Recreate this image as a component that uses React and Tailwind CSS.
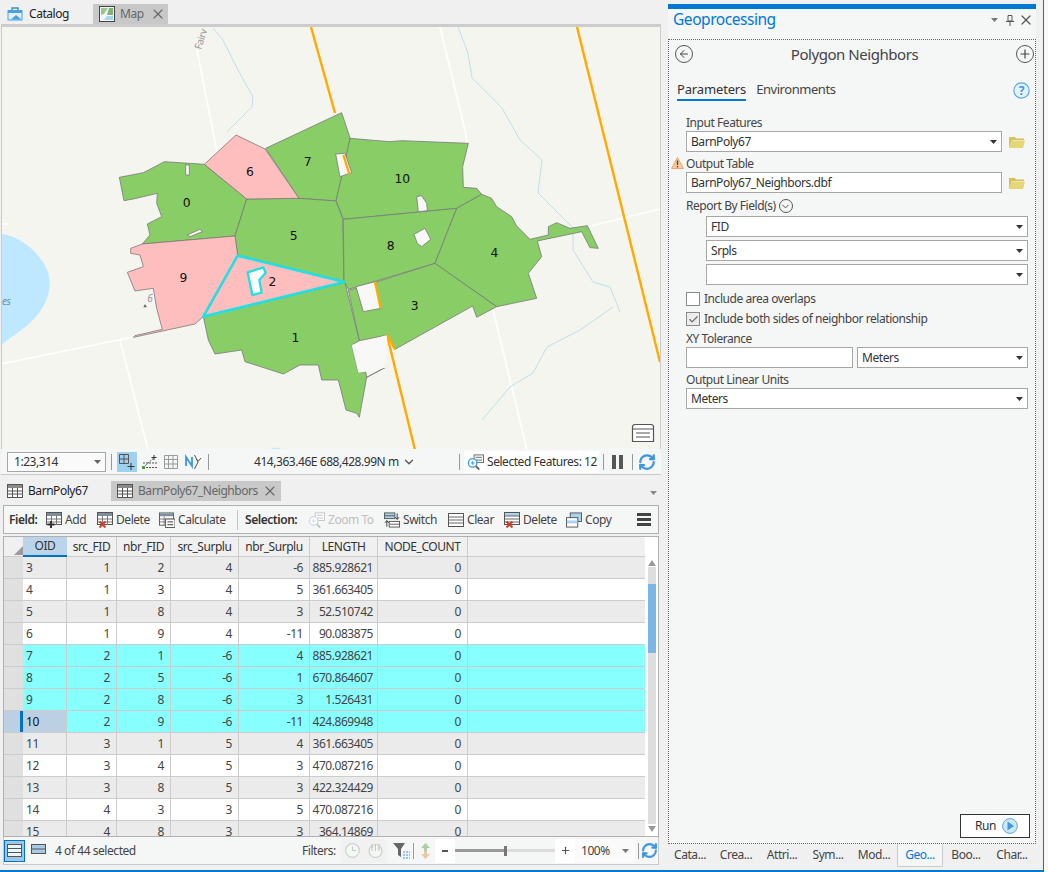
import { ChevronDown, Plus, RefreshCw, X, ArrowLeft, Check } from "lucide-react";

const FONT = { fontFamily: '"Noto Sans", sans-serif' };

const ROWS = [
  ["3", "1", "2", "4", "-6", "885.928621", "0", "g"],
  ["4", "1", "3", "4", "5", "361.663405", "0", "w"],
  ["5", "1", "8", "4", "3", "52.510742", "0", "g"],
  ["6", "1", "9", "4", "-11", "90.083875", "0", "w"],
  ["7", "2", "1", "-6", "4", "885.928621", "0", "c"],
  ["8", "2", "5", "-6", "1", "670.864607", "0", "c"],
  ["9", "2", "8", "-6", "3", "1.526431", "0", "c"],
  ["10", "2", "9", "-6", "-11", "424.869948", "0", "c"],
  ["11", "3", "1", "5", "4", "361.663405", "0", "g"],
  ["12", "3", "4", "5", "3", "470.087216", "0", "w"],
  ["13", "3", "8", "5", "3", "422.324429", "0", "g"],
  ["14", "4", "3", "3", "5", "470.087216", "0", "w"],
  ["15", "4", "8", "3", "3", "364.14869", "0", "g"]
];

const ROW_BG = { g: "bg-[#ebebeb]", w: "bg-white", c: "bg-[#88ffff]" };
const GRID_COLS = "grid grid-cols-[16px_3px_44px_50px_54px_68px_71px_68px_90px_178px]";

const GREEN = "#89cd66";
const PINK = "#ffbebe";
const EDGE = "#787878";
const BG = "#f5f5f0";

const GREEN_POLYS = [
  "58,232 130,218 165,200 193,185 313,193 440,297 405,408 127,432 150,405 142,372 185,350 170,310 172,280 100,297 72,302",
  "497,145 725,38 750,113 745,150 708,303 597,295",
  "750,115 868,125 905,122 1105,130 1088,200 1090,262 1130,265 1145,283 1070,325 730,358 708,303 725,230",
  "440,297 597,295 708,303 728,355 732,545 413,465 405,408",
  "730,358 1070,325 1005,490 745,568 732,545",
  "1070,325 1145,283 1175,295 1190,320 1235,350 1250,378 1290,418 1345,405 1345,380 1370,368 1410,385 1462,377 1495,445 1470,443 1445,395 1312,423 1325,470 1285,520 1310,595 1190,620 1005,490",
  "745,570 768,565 1005,490 1190,620 1130,652 1118,618 885,748 862,705 778,722",
  "310,650 735,548 778,722 755,735 775,818 797,815 800,832 855,803 800,832 778,952 770,940 738,930 715,840 665,840 655,795 600,795 550,822 435,785 425,750 345,762 325,720"
];

const PINK_POLYS = [
  "313,193 408,105 495,147 597,295 440,297",
  "127,432 405,408 413,465 310,650 285,672 100,712 105,707 187,688 170,625 160,565 105,573 82,517 130,500 120,465 92,460 92,445"
];

const HOLES = [
  "257,195 268,195 268,225 257,225",
  "262,405 300,388 307,395 270,410",
  "707,162 735,160 755,218 720,230",
  "950,290 965,287 980,310 982,332 955,335",
  "942,403 975,385 992,418 965,440 952,430",
  "768,560 825,545 842,625 790,635"
];

const MAP_LABELS = [
  ["0", 260, 309], ["6", 450, 215], ["7", 623, 184], ["10", 907, 235], ["5", 581, 406], ["8", 872, 436],
  ["4", 1183, 457], ["9", 250, 532], ["2", 517, 544], ["3", 944, 616], ["1", 586, 712]
];

function MapDrawing() {
  return (
    <svg width="658" height="422" viewBox="2 27 658 422" className="block" style={{ background: BG }}>
      {/* lake */}
      <path d="M1 234 C20 236 40 252 48 272 C54 292 44 312 24 328 L1 345 Z" fill="#bee8ff" />
      <path d="M270 450 C273 447 280 447 283 450 Z" fill="#bee8ff" />
      <text x="2" y="305" fontSize="10" fontStyle="italic" fill="#6f8fa8" style={FONT}>es</text>

      {/* roads */}
      <g fill="none" stroke="#ffffff" strokeWidth="1.6">
        <path d="M197 50 L217 152" />
        <path d="M440 27 L465 130 L467 143" />
        <path d="M493 310 L527 450" />
        <path d="M120 340 L148 450" />
        <path d="M1 364 L133 337 M587 227 L660 209" />
        <path d="M1 224 L8 224" />
      </g>

      {/* streams */}
      <g fill="none" stroke="#b9e2ea" strokeWidth="1">
        <path d="M213 28 L223 40 L238 70 L253 97 L252 107 L227 132" />
        <path d="M458 27 L468 53 L472 78 L502 108 L520 140 L542 160 L538 193 L573 228 L573 250 L593 282 L610 287 L620 312" />
        <path d="M613 307 L580 330 L547 347 L533 373 L510 387 L482 420" />
      </g>

      {/* rail lines */}
      <g fill="none" stroke="#ffaa00" strokeWidth="2.4">
        <path d="M311 27 L335 113" />
        <path d="M387 335 L415 450" />
        <path d="M577 27 L660 362" />
      </g>

      <text x="0" y="0" fontSize="10" fill="#9a9a9a" transform="translate(201 50) rotate(-72)" style={FONT}>Fairv</text>

      <g transform="translate(100 100) scale(0.33333)">
        <g strokeWidth="2.4" stroke={EDGE} strokeLinejoin="round">
          {GREEN_POLYS.map((points) => (
            <polygon key={points} points={points} fill={GREEN} />
          ))}
          {PINK_POLYS.map((points) => (
            <polygon key={points} points={points} fill={PINK} />
          ))}
          {HOLES.map((points) => (
            <polygon key={points} points={points} fill="#f8f8f6" />
          ))}
        </g>
        <polygon points="755,735 862,705 855,803 797,815 775,818" fill="#f8f8f6" />
        <path d="M862 705 L885 748" stroke="#ffaa00" strokeWidth="7" fill="none" />
        <path d="M730 165 L748 222 M825 545 L842 625" stroke="#ffaa00" strokeWidth="7" fill="none" />
        <polygon points="413,467 733,546 310,650" fill={PINK} stroke="#22dfe6" strokeWidth="8" strokeLinejoin="round" />
        <polygon points="443,517 490,502 497,518 478,540 485,578 457,585" fill="#ffffff" stroke="#22dfe6" strokeWidth="7" strokeLinejoin="round" />
        <polygon points="130,622 141,622 135,612" fill="#666" />
        <text x="142" y="606" fontSize="30" fontStyle="italic" fill="#999" style={FONT}>6</text>
        {MAP_LABELS.map(([label, x, y]) => (
          <text
            key={label}
            x={x}
            y={y + 13}
            fontSize="37"
            fill="#111"
            textAnchor="middle"
            style={{ fontFamily: '"DejaVu Sans", sans-serif', letterSpacing: 0 }}
          >
            {label}
          </text>
        ))}
      </g>
    </svg>
  );
}

function Caret({ className = "", color = "#333" }) {
  return (
    <svg width="7" height="4" viewBox="0 0 7 4" className={className}>
      <path d="M0 0 H7 L3.5 4 Z" fill={color} />
    </svg>
  );
}

function GridIcon({ className = "", stroke = "#555", head = "#8a8a8a" }) {
  return (
    <svg width="16" height="14" viewBox="0 0 16 14" className={className}>
      <rect x="0.5" y="0.5" width="15" height="13" fill="#fff" stroke={stroke} />
      <rect x="1" y="1" width="14" height="3" fill={head} />
      <path d="M1 7 H15 M1 10 H15 M5.5 4 V13 M10.5 4 V13" stroke={stroke} strokeWidth="1" />
    </svg>
  );
}

function AddIcon() {
  return (
    <svg width="16" height="16" viewBox="0 0 16 16">
      <rect x="0.5" y="0.5" width="15" height="12" fill="#fff" stroke="#555" />
      <rect x="1" y="1" width="14" height="3" fill="#7d8ea0" />
      <path d="M1 7 H15 M1 10 H15 M5.5 4 V13 M10.5 4 V13" stroke="#777" />
      <path d="M5 9 V16 M1.5 12.5 H8.5" stroke="#333" strokeWidth="2" />
    </svg>
  );
}

function DeleteFieldIcon() {
  return (
    <svg width="16" height="16" viewBox="0 0 16 16">
      <rect x="0.5" y="0.5" width="15" height="12" fill="#fff" stroke="#555" />
      <rect x="1" y="1" width="14" height="3" fill="#7d8ea0" />
      <path d="M1 7 H15 M1 10 H15 M5.5 4 V13 M10.5 4 V13" stroke="#777" />
      <path d="M2.5 9.5 L8.5 15.5 M8.5 9.5 L2.5 15.5" stroke="#c8452c" strokeWidth="2" />
    </svg>
  );
}

function CalculateIcon() {
  return (
    <svg width="16" height="16" viewBox="0 0 17 16">
      <rect x="0.5" y="0.5" width="15" height="13" fill="#fff" stroke="#555" />
      <rect x="1" y="1" width="14" height="3" fill="#7d8ea0" />
      <path d="M1 7 H15 M1 10 H15 M5.5 4 V13" stroke="#777" />
      <rect x="7" y="7" width="10" height="9" fill="#fff" stroke="#555" />
      <path d="M9 10 H15 M9 13 H15" stroke="#333" />
    </svg>
  );
}

function ZoomToIcon({ color = "#c4c4c4", glass = "#c9dcea" }) {
  return (
    <svg width="17" height="16" viewBox="0 0 18 16">
      <rect x="7.5" y="0.5" width="10" height="8" fill="#fff" stroke={color} />
      <path d="M9 3 H16 M9 6 H16" stroke={color} />
      <circle cx="6" cy="9" r="4.5" fill="#fff" stroke={glass} strokeWidth="1.4" />
      <path d="M4 9 H8 M6 7 V11" stroke={glass} />
      <path d="M9.5 12.5 L13 16" stroke={color} strokeWidth="2" />
    </svg>
  );
}

function SwitchIcon() {
  return (
    <svg width="16" height="16" viewBox="0 0 17 16">
      <rect x="0.5" y="0.5" width="11" height="6" fill="#a8d4ef" stroke="#555" />
      <path d="M1 3.5 H11" stroke="#555" />
      <rect x="5.5" y="9.5" width="11" height="6" fill="#fff" stroke="#555" />
      <path d="M6 12.5 H16" stroke="#555" />
      <path d="M14 1 V7 M12 5 L14 7.5 L16 5 M3 15 V9 M1 11 L3 8.5 L5 11" stroke="#333" fill="none" />
    </svg>
  );
}

function ClearIcon() {
  return (
    <svg width="16" height="14" viewBox="0 0 16 14">
      <rect x="0.5" y="0.5" width="15" height="13" fill="#fff" stroke="#555" />
      <path d="M1 4 H15 M1 7 H15 M1 10 H15" stroke="#666" />
    </svg>
  );
}

function DeleteRowsIcon() {
  return (
    <svg width="16" height="16" viewBox="0 0 16 16">
      <rect x="0.5" y="0.5" width="15" height="12" fill="#fff" stroke="#555" />
      <rect x="1" y="1" width="14" height="3" fill="#a8d4ef" />
      <path d="M1 4 H15 M1 7 H15 M1 10 H15" stroke="#666" />
      <path d="M2.5 9.5 L8.5 15.5 M8.5 9.5 L2.5 15.5" stroke="#c8452c" strokeWidth="2" />
    </svg>
  );
}

function CopyIcon() {
  return (
    <svg width="16" height="16" viewBox="0 0 17 16">
      <rect x="4.5" y="0.5" width="12" height="9" fill="#a8d4ef" stroke="#555" />
      <rect x="0.5" y="5.5" width="12" height="10" fill="#fff" stroke="#555" />
      <rect x="1" y="8.5" width="11" height="3" fill="#a8d4ef" />
    </svg>
  );
}

function CatalogIcon() {
  return (
    <svg width="16" height="14" viewBox="0 0 16 14">
      <path d="M5 3 V1 H11 V3" fill="none" stroke="#3a8fd0" strokeWidth="1.4" />
      <rect x="0.5" y="3" width="15" height="10.5" fill="#4aa3de" />
      <rect x="1.5" y="6" width="13" height="6.5" fill="#dff0fa" />
      <path d="M4 12.5 L9 8 L14.5 12.5 Z" fill="#4aa3de" />
    </svg>
  );
}

function MapTabIcon() {
  return (
    <svg width="16" height="16" viewBox="0 0 16 16">
      <rect x="0.5" y="0.5" width="15" height="15" fill="#f5f5f5" stroke="#444" />
      <path d="M2 2 H9 L5 8 L2 9 Z" fill="#9cc58d" />
      <path d="M10 2 H14 V9 L8 9 Z" fill="#7fb27a" />
      <path d="M5 14 L8 10 L14 10 V14 Z" fill="#a9d6ef" />
    </svg>
  );
}

function FolderIcon() {
  return (
    <svg width="16" height="12" viewBox="0 0 16 12" className="ml-[7px]">
      <path d="M0 12 V1 H6 L7 2.5 H15 V4 H3 Z" fill="#d4c25b" />
      <path d="M0 12 L2.5 4.5 H16 L14 12 Z" fill="#e6d675" />
    </svg>
  );
}

function DimClock() {
  return (
    <svg width="15" height="15" viewBox="0 0 15 15">
      <circle cx="7.5" cy="7.5" r="6.8" fill="#f4f8f4" stroke="#c8d4c8" strokeWidth="1.2" />
      <path d="M7.5 3.5 V7.5 H11" fill="none" stroke="#c4c4c4" />
    </svg>
  );
}

function DimRange() {
  return (
    <svg width="15" height="15" viewBox="0 0 15 15">
      <circle cx="7.5" cy="8" r="6.5" fill="#f4f8f4" stroke="#c8d4c8" strokeWidth="1.2" />
      <path d="M4 1 V8 M7.5 1 V8 M11 1 V8 M2.5 4 H5.5 M9.5 5 H12.5" fill="none" stroke="#c4c4c4" />
    </svg>
  );
}

function SelectField({ value = "", className = "" }) {
  return (
    <div className={`flex h-[21px] items-center justify-between border border-[#a6a6a6] bg-white pl-[4px] pr-[3px] text-[12px] text-[#333] ${className}`}>
      <span>{value}</span>
      <Caret className="mr-[1px]" />
    </div>
  );
}

function ToolButton({ icon, label, className = "", disabled = false }) {
  return (
    <div className={`flex items-center gap-[3px] whitespace-nowrap ${disabled ? "text-[#c0c0c0]" : "text-[#444]"} ${className}`}>
      {icon}
      <span>{label}</span>
    </div>
  );
}

function TableRow({ row }) {
  const [oid, a, b, c, d, len, nodes, kind] = row;
  const active = oid === "10";
  const cell = "flex h-[22px] items-center justify-end border-r border-b border-[#cccccc] pr-[6px]";
  return (
    <div className={`${GRID_COLS} text-[12px] text-[#444] ${ROW_BG[kind]}`}>
      <div className={`h-[22px] border-b border-[#cccccc] ${active ? "bg-[#bcd0e4]" : "bg-[#e0e0e0]"}`} />
      <div className={`h-[22px] border-b border-[#cccccc] ${active ? "bg-[#0072c6]" : "bg-[#e0e0e0]"}`} />
      <div className={`flex h-[22px] items-center border-r border-b border-[#cccccc] pl-[3px] ${active ? "bg-[#bcd0e4] text-[#111]" : ""}`}>
        {oid}
      </div>
      <div className={cell}>{a}</div>
      <div className={cell}>{b}</div>
      <div className={cell}>{c}</div>
      <div className={cell}>{d}</div>
      <div className="flex h-[22px] items-center justify-end border-r border-b border-[#cccccc] pr-[4px]">{len}</div>
      <div className={cell}>{nodes}</div>
      <div className="h-[22px] border-b border-[#cccccc]" />
    </div>
  );
}

function AttributeTable() {
  const headers = ["src_FID", "nbr_FID", "src_Surplu", "nbr_Surplu", "LENGTH", "NODE_COUNT"];
  return (
    <div className="flex h-[301px] border border-[#b0b0b0] bg-white">
      <div className="w-[641px] overflow-hidden">
        <div className={`${GRID_COLS} text-[12px] text-[#333]`}>
          <div className="relative col-span-2 h-[20px] border-b border-[#cccccc] bg-[#f0f0f0]">
            <svg width="9" height="9" viewBox="0 0 9 9" className="absolute right-0 bottom-[1px]">
              <path d="M9 0 V9 H0 Z" fill="#9a9a9a" />
            </svg>
          </div>
          <div className="flex h-[20px] items-center justify-center border-b-2 border-[#0072c6] bg-[#bcd4ea]">OID</div>
          {headers.map((name) => (
            <div key={name} className="flex h-[20px] items-center justify-center border-r border-b border-[#cccccc] bg-[#f0f0f0]">
              {name}
            </div>
          ))}
          <div className="h-[20px] border-b border-[#cccccc] bg-[#f0f0f0]" />
        </div>
        {ROWS.map((row) => (
          <TableRow key={row[0]} row={row} />
        ))}
      </div>
      <div className="flex w-[13px] flex-col items-center pt-[23px]">
        <svg width="8" height="6" viewBox="0 0 8 6">
          <path d="M0 6 H8 L4 0 Z" fill="#9a9a9a" />
        </svg>
        <div className="mt-[1px] h-[257px] w-[8px] bg-[#dedede] pt-[17px]">
          <div className="h-[69px] bg-[#7ab7e6]" />
        </div>
        <svg width="8" height="6" viewBox="0 0 8 6" className="mt-[2px]">
          <path d="M0 0 H8 L4 6 Z" fill="#9a9a9a" />
        </svg>
      </div>
    </div>
  );
}

function MapStatusBar() {
  return (
    <div className="ml-px flex h-[26px] w-[660px] items-center border-b border-[#c8c8c8] bg-[#f5f6f6] text-[12px] text-[#333]">
      <div className="ml-[6px] flex h-[20px] w-[99px] items-center justify-between border border-[#a6a6a6] bg-[#fafafa] pl-[6px] pr-[4px]">
        <span>1:23,314</span>
        <Caret color="#666" />
      </div>
      <div className="ml-[5px] h-[16px] w-px bg-[#999]" />
      <div className="ml-[5px] flex h-[20px] w-[20px] items-center justify-center bg-[#9ed0f0]">
        <svg width="16" height="16" viewBox="0 0 16 16">
          <path d="M0.5 0.5 H9.5 V9.5 H0.5 Z M5 0.5 V9.5 M0.5 5 H9.5" fill="none" stroke="#555" />
          <path d="M12 9 V16 M8.5 12.5 H15.5" stroke="#333" />
        </svg>
      </div>
      <svg width="16" height="16" viewBox="0 0 16 16" className="ml-[5px]">
        <path d="M1 13.5 L13 3 M1 9 H15 M1 13.5 H15" stroke="#555" strokeDasharray="2 1" fill="none" />
        <rect x="0" y="12" width="3" height="3" fill="#4d9a3f" />
        <path d="M12 1 V6 M9.5 3.5 H14.5" stroke="#333" />
      </svg>
      <svg width="14" height="14" viewBox="0 0 14 14" className="ml-[6px]">
        <path d="M0.5 0.5 H13.5 V13.5 H0.5 Z M0.5 4.5 H13.5 M0.5 9 H13.5 M4.5 0.5 V13.5 M9 0.5 V13.5" fill="none" stroke="#9a9a9a" />
      </svg>
      <svg width="17" height="16" viewBox="0 0 17 16" className="ml-[7px]">
        <path d="M1 12 V3 L7 12 V3" fill="none" stroke="#3d97e0" strokeWidth="1.8" />
        <path d="M9.5 15 L13 8 L9.5 1 M11 5 L13.5 7 L16 4" fill="none" stroke="#555" />
      </svg>
      <div className="ml-[6px] h-[16px] w-px bg-[#999]" />
      <span className="ml-[45px] w-[142px] whitespace-nowrap">414,363.46E 688,428.99N m</span>
      <ChevronDown size={14} strokeWidth={2.2} className="ml-[6px] text-[#555]" />
      <div className="ml-[43px] h-[16px] w-px bg-[#999]" />
      <div className="ml-[4px] flex h-[22px] w-[135px] items-center gap-[3px] bg-white pl-[3px]">
        <ZoomToIcon color="#666" glass="#3d97e0" />
        <span className="whitespace-nowrap">Selected Features: 12</span>
      </div>
      <div className="ml-[4px] h-[16px] w-px bg-[#999]" />
      <div className="ml-[8px] flex gap-[3px]">
        <div className="h-[14px] w-[4px] bg-[#555]" />
        <div className="h-[14px] w-[4px] bg-[#555]" />
      </div>
      <div className="ml-[9px] h-[16px] w-px bg-[#999]" />
      <RefreshCw size={18} strokeWidth={3} className="ml-[5px] text-[#3d97e0]" />
    </div>
  );
}

function TableToolbar() {
  return (
    <div className="flex h-[29px] items-center border border-[#b0b0b0] bg-[#f5f6f6] pl-[5px] text-[12px]">
      <span className="w-[37px] font-semibold text-[#333]">Field:</span>
      <ToolButton className="w-[51px]" icon={<AddIcon />} label="Add" />
      <ToolButton className="w-[62px]" icon={<DeleteFieldIcon />} label="Delete" />
      <ToolButton className="w-[73px]" icon={<CalculateIcon />} label="Calculate" />
      <div className="ml-[5px] h-[20px] w-px bg-[#c4c4c4]" />
      <span className="ml-[7px] w-[63px] font-semibold text-[#333]">Selection:</span>
      <ToolButton className="w-[76px]" disabled icon={<ZoomToIcon />} label="Zoom To" />
      <ToolButton className="w-[64px]" icon={<SwitchIcon />} label="Switch" />
      <ToolButton className="w-[56px]" icon={<ClearIcon />} label="Clear" />
      <ToolButton className="w-[62px]" icon={<DeleteRowsIcon />} label="Delete" />
      <ToolButton className="w-[60px]" icon={<CopyIcon />} label="Copy" />
      <div className="ml-auto mr-[7px] flex w-[14px] flex-col gap-[2px]">
        <div className="h-[3px] bg-[#444]" />
        <div className="h-[3px] bg-[#444]" />
        <div className="h-[3px] bg-[#444]" />
      </div>
    </div>
  );
}

function TableFooter() {
  return (
    <div className="flex h-[28px] items-center border-x border-b border-[#c8c8c8] bg-[#f5f6f6] text-[12px] text-[#444]">
      <div className="flex h-[22px] w-[21px] items-center justify-center border border-[#0072c6] bg-[#9ec6e6]">
        <svg width="15" height="13" viewBox="0 0 15 13">
          <rect x="0.5" y="0.5" width="14" height="12" fill="#eaf6fd" stroke="#555" />
          <path d="M1 4.5 H14 M1 8.5 H14" stroke="#555" />
        </svg>
      </div>
      <svg width="15" height="10" viewBox="0 0 15 10" className="mb-[4px] ml-[6px]">
        <rect x="0.5" y="0.5" width="14" height="9" fill="#a8cbe6" stroke="#555" />
        <path d="M1 5 H14" stroke="#555" />
      </svg>
      <span className="ml-[9px] w-[247px] whitespace-nowrap">4 of 44 selected</span>
      <span className="w-[39px]">Filters:</span>
      <div className="flex h-[24px] w-[46px] items-center justify-center gap-[8px] bg-[#f1f1f1]">
        <DimClock />
        <DimRange />
      </div>
      <svg width="18" height="16" viewBox="0 0 18 16" className="ml-[6px]">
        <path d="M0 0 H12 L8 6 V14 L5 12 V6 Z" fill="#666" />
        <path d="M10 9 H17 M10 12 H17 M10 15 H17" stroke="#3d97e0" strokeDasharray="2 1" />
      </svg>
      <div className="ml-[2px] h-[16px] w-px bg-[#999]" />
      <svg width="11" height="16" viewBox="0 0 11 16" className="ml-[6px]">
        <path d="M5.5 0 L10 5 H7 V8 H4 V5 H1 Z" fill="#a9cfa2" />
        <path d="M5.5 16 L10 11 H7 V8 H4 V11 H1 Z" fill="#e8c9a6" />
      </svg>
      <div className="ml-[4px] flex h-[24px] w-[20px] items-center justify-center bg-white">
        <div className="h-[2px] w-[6px] bg-[#555]" />
      </div>
      <div className="flex h-[24px] w-[100px] items-center bg-[#f5f6f6]">
        <div className="h-[3px] w-[49px] bg-[#999]" />
        <div className="h-[10px] w-[3px] bg-[#777]" />
        <div className="h-[3px] w-[48px] bg-[#dcdcdc]" />
      </div>
      <div className="flex h-[24px] w-[20px] items-center justify-center bg-white">
        <Plus size={11} strokeWidth={2.5} className="text-[#555]" />
      </div>
      <div className="flex h-[24px] w-[60px] items-center justify-between bg-[#fafafa] pl-[6px] pr-[6px]">
        <span>100%</span>
        <Caret color="#777" />
      </div>
      <div className="ml-[3px] h-[16px] w-px bg-[#999]" />
      <RefreshCw size={17} strokeWidth={3} className="ml-[2px] text-[#3d97e0]" />
    </div>
  );
}

function LeftColumn() {
  return (
    <div className="flex w-[668px] shrink-0 flex-col">
      <div className="flex h-[24px] items-end text-[12px]">
        <div className="flex h-[20px] w-[93px] items-center pl-[7px]">
          <CatalogIcon />
          <span className="ml-[6px] text-[#222]">Catalog</span>
        </div>
        <div className="flex h-[20px] w-[75px] items-center bg-[#c8c8c8] pl-[6px] text-[#666]">
          <MapTabIcon />
          <span className="ml-[5px]">Map</span>
          <X size={16} strokeWidth={1.6} className="ml-auto mr-[2px] text-[#666]" />
        </div>
      </div>
      <div className="relative ml-px h-[425px] w-[660px] overflow-hidden border-x border-t-[3px] border-[#cccccc]">
        <MapDrawing />
        <svg width="24" height="20" viewBox="0 0 24 20" className="absolute right-[5px] bottom-[6px]">
          <path d="M1.5 4 Q1.5 1.5 4 1.5 H20 Q22.5 1.5 22.5 4 V18.5 H1.5 Z" fill="#fff" stroke="#555" strokeWidth="1.2" />
          <path d="M1.5 6 H22.5 M5 10 H19 M5 14 H19" stroke="#555" strokeWidth="1.2" />
        </svg>
      </div>
      <MapStatusBar />
      <div className="flex h-[26px] w-[660px] items-end text-[12px]">
        <div className="flex h-[20px] w-[111px] items-center pl-[7px]">
          <GridIcon />
          <span className="ml-[5px] text-[#222]">BarnPoly67</span>
        </div>
        <div className="flex h-[20px] w-[170px] items-center bg-[#c8c8c8] pl-[6px] text-[#666]">
          <GridIcon />
          <span className="ml-[5px]">BarnPoly67_Neighbors</span>
          <X size={16} strokeWidth={1.6} className="ml-auto mr-[3px] text-[#666]" />
        </div>
        <Caret className="mb-[6px] ml-auto mr-[3px]" color="#888" />
      </div>
      <div className="ml-[3px] mt-[4px] flex w-[656px] flex-col gap-[2px]">
        <TableToolbar />
        <AttributeTable />
      </div>
      <div className="ml-[3px] w-[656px]">
        <TableFooter />
      </div>
    </div>
  );
}

function GeoprocessingPane() {
  const dockTabs = ["Cata...", "Crea...", "Attri...", "Sym...", "Mod..."];
  return (
    <div className="flex w-[368px] shrink-0 flex-col pt-[4px]">
      <div className="h-[5px] bg-[#0078d4]" />
      <div className="flex h-[30px] items-center bg-[#f5f6f6] pb-[8px] pl-[5px] pr-[2px]">
        <span className="text-[15.5px] text-[#0078d4]">Geoprocessing</span>
        <Caret className="ml-auto" color="#777" />
        <svg width="8" height="11" viewBox="0 0 8 11" className="ml-[8px]">
          <path d="M2 0.5 H6 V6 H2 Z M0 6.5 H8 M4 7 V11" fill="none" stroke="#555" />
        </svg>
        <X size={16} strokeWidth={1.8} className="ml-[4px] text-[#555]" />
      </div>
      <div className="flex h-[805px] flex-col border border-dotted border-[#666] bg-[#f5f6f6] text-[12px] text-[#444]">
        <div className="mt-[5px] flex h-[18px] items-center justify-between pl-[6px] pr-[1px]">
          <div className="flex h-[18px] w-[18px] items-center justify-center rounded-full border border-[#555]">
            <ArrowLeft size={12} strokeWidth={2} className="text-[#444]" />
          </div>
          <span className="text-[15px] text-[#444]">Polygon Neighbors</span>
          <div className="flex h-[18px] w-[18px] items-center justify-center rounded-full border border-[#555]">
            <Plus size={14} strokeWidth={2} className="text-[#444]" />
          </div>
        </div>
        <div className="mt-[17px] flex items-start pl-[8px] pr-[5px] text-[13px] leading-[18px]">
          <div className="border-b-2 border-[#0078d4] pb-px tracking-[-0.15px] text-[#333]">Parameters</div>
          <div className="ml-[10px]">Environments</div>
          <svg width="17" height="17" viewBox="0 0 17 17" className="ml-auto mt-[2px]">
            <circle cx="8.5" cy="8.5" r="7.7" fill="#e4f2fb" stroke="#5aa9e0" strokeWidth="1.2" />
            <text x="8.5" y="13" fontSize="12" fontWeight="700" fill="#3d97e0" textAnchor="middle" style={FONT}>?</text>
          </svg>
        </div>

        <div className="ml-[17px] mt-[14px] h-[16px] leading-[16px]">Input Features</div>
        <div className="ml-[17px] flex items-center">
          <SelectField value="BarnPoly67" className="w-[316px]" />
          <FolderIcon />
        </div>
        <div className="relative ml-[17px] mt-[4px] h-[16px] leading-[16px]">
          <svg width="13" height="12" viewBox="0 0 13 12" className="absolute -left-[15px] top-[1px]">
            <path d="M6.5 0.5 L12.5 11.5 H0.5 Z" fill="#f6c99d" stroke="#e5a877" />
            <path d="M6.5 3.5 V8 M6.5 9 V10.5" stroke="#444" strokeWidth="1.3" />
          </svg>
          Output Table
        </div>
        <div className="ml-[17px] flex items-center">
          <div className="flex h-[21px] w-[316px] items-center border border-[#a6a6a6] bg-white pl-[4px] text-[#333]">
            BarnPoly67_Neighbors.dbf
          </div>
          <FolderIcon />
        </div>
        <div className="ml-[17px] mt-[5px] flex h-[16px] items-center">
          <span>Report By Field(s)</span>
          <div className="ml-[3px] flex h-[14px] w-[14px] items-center justify-center rounded-full border border-[#555]">
            <ChevronDown size={11} strokeWidth={2} className="text-[#444]" />
          </div>
        </div>
        <div className="ml-[37px] mt-[2px] flex w-[322px] flex-col gap-[3px]">
          <SelectField value="FID" />
          <SelectField value="Srpls" />
          <SelectField />
        </div>
        <div className="ml-[17px] mt-[7px] flex h-[14px] items-center">
          <div className="h-[14px] w-[14px] border border-[#8a8a8a] bg-white" />
          <span className="ml-[4px]">Include area overlaps</span>
        </div>
        <div className="ml-[17px] mt-[6px] flex h-[14px] items-center">
          <div className="flex h-[14px] w-[14px] items-center justify-center border border-[#8a8a8a] bg-[#ececec]">
            <Check size={11} strokeWidth={2.5} className="text-[#666]" />
          </div>
          <span className="ml-[4px]">Include both sides of neighbor relationship</span>
        </div>
        <div className="ml-[17px] mt-[5px] h-[16px] leading-[16px]">XY Tolerance</div>
        <div className="ml-[17px] flex gap-[4px]">
          <div className="h-[21px] w-[167px] border border-[#a6a6a6] bg-white" />
          <SelectField value="Meters" className="w-[171px]" />
        </div>
        <div className="ml-[17px] mt-[4px] h-[16px] leading-[16px]">Output Linear Units</div>
        <SelectField value="Meters" className="ml-[17px] w-[342px]" />

        <div className="mb-[5px] ml-[291px] mt-auto flex h-[24px] w-[70px] items-center justify-end gap-[6px] border-[1.5px] border-[#333] bg-white pr-[11px] text-[#333]">
          <span>Run</span>
          <svg width="16" height="16" viewBox="0 0 16 16">
            <circle cx="8" cy="8" r="7.4" fill="#cfe6f7" stroke="#5aa9e0" />
            <path d="M5.5 3.5 L12 8 L5.5 12.5 Z" fill="#3d97e0" />
          </svg>
        </div>
      </div>
      <div className="-ml-px flex h-[22px] items-start text-[12px] text-[#444]">
        {dockTabs.map((name) => (
          <div key={name} className="flex h-[22px] w-[46px] items-center justify-center">
            {name}
          </div>
        ))}
        <div className="flex h-[23px] w-[46px] items-center justify-center border-x border-b border-[#cccccc] bg-[#f5f6f6] text-[#0078d4]">
          Geo...
        </div>
        <div className="flex h-[22px] w-[46px] items-center justify-center">Boo...</div>
        <div className="flex h-[22px] w-[46px] items-center justify-center">Char...</div>
      </div>
    </div>
  );
}

export default function App() {
  return (
    <div className="flex h-[872px] w-[1048px] overflow-hidden bg-[#f8f8f8] tracking-[-0.45px]" style={FONT}>
      <div className="flex h-[872px] w-[1044px] border-r border-b-2 border-[#0078d4] bg-[#f0f0f0]">
        <LeftColumn />
        <GeoprocessingPane />
      </div>
    </div>
  );
}
